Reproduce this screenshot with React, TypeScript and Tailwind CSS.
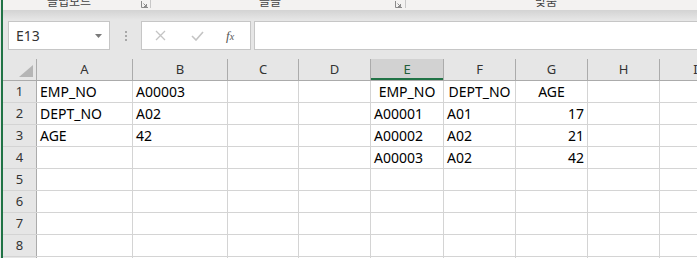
import React from 'react'

const COLS: Array<{ key: string; w: string }> = [
  { key: 'A', w: 'w-[96px]' },
  { key: 'B', w: 'w-[95px]' },
  { key: 'C', w: 'w-[71px]' },
  { key: 'D', w: 'w-[72px]' },
  { key: 'E', w: 'w-[73px]' },
  { key: 'F', w: 'w-[72px]' },
  { key: 'G', w: 'w-[72px]' },
  { key: 'H', w: 'w-[72px]' },
  { key: 'I', w: 'w-[72px]' },
]

type Cell = { v: string; align?: 'left' | 'center' | 'right' }

const DATA: Record<number, Record<string, Cell>> = {
  1: {
    A: { v: 'EMP_NO' },
    B: { v: 'A00003' },
    E: { v: 'EMP_NO', align: 'center' },
    F: { v: 'DEPT_NO', align: 'center' },
    G: { v: 'AGE', align: 'center' },
  },
  2: {
    A: { v: 'DEPT_NO' },
    B: { v: 'A02' },
    E: { v: 'A00001' },
    F: { v: 'A01' },
    G: { v: '17', align: 'right' },
  },
  3: {
    A: { v: 'AGE' },
    B: { v: '42' },
    E: { v: 'A00002' },
    F: { v: 'A02' },
    G: { v: '21', align: 'right' },
  },
  4: {
    E: { v: 'A00003' },
    F: { v: 'A02' },
    G: { v: '42', align: 'right' },
  },
}

const ROWS = [1, 2, 3, 4, 5, 6, 7, 8, 9]

function Launcher() {
  return (
    <svg width="7" height="7" viewBox="0 0 7 7" className="shrink-0">
      <path d="M0.5 0v6.5H7" fill="none" stroke="#8a8a8a" strokeWidth="1" />
      <path d="M2.5 2.5l3 3M5.5 3v2.5H3" fill="none" stroke="#8a8a8a" strokeWidth="1" />
    </svg>
  )
}

function RibbonLabel({ text, w }: { text: string; w: string }) {
  return (
    <div className={`${w} shrink-0 -mt-[7px] text-[12px] leading-[16px] text-[#444] text-center whitespace-nowrap`}>
      {text}
    </div>
  )
}

export default function App() {
  return (
    <div className="w-[697px] h-[258px] overflow-hidden flex bg-[#e6e6e6] font-['Noto_Sans','Noto_Sans_CJK_KR',sans-serif]">
      {/* window edge */}
      <div className="w-px shrink-0 bg-[#e6e6e6]" />
      <div className="w-[2px] shrink-0 bg-[#217346]" />

      <div className="flex-1 min-w-0 h-full flex flex-col overflow-hidden">
        {/* Ribbon bottom (group labels, cut off by the window) */}
        <div className="h-[10px] shrink-0 overflow-hidden bg-[#f3f2f1] flex items-start font-['Noto_Sans_CJK_KR',sans-serif]">
          <div className="w-[42px] shrink-0" />
          <RibbonLabel text="클립보드" w="w-[48px]" />
          <div className="w-[48px] shrink-0" />
          <div className="pt-[1px]"><Launcher /></div>
          <div className="w-[2px] shrink-0" />
          <div className="w-px h-[8px] bg-[#c8c8c8] shrink-0" />
          <div className="w-[107px] shrink-0" />
          <RibbonLabel text="글꼴" w="w-[24px]" />
          <div className="w-[113px] shrink-0" />
          <div className="pt-[1px]"><Launcher /></div>
          <div className="w-[3px] shrink-0" />
          <div className="w-px h-[8px] bg-[#c8c8c8] shrink-0" />
          <div className="w-[128px] shrink-0" />
          <RibbonLabel text="맞춤" w="w-[24px]" />
        </div>
        <div className="h-[10px] shrink-0 bg-gradient-to-b from-[#d3d3d3] to-[#e6e6e6]" />

        {/* Formula bar */}
        <div className="h-[39px] shrink-0 flex items-start pt-px">
          <div className="ml-[5px] w-[102px] h-[29px] bg-white border border-[#c6c6c6] flex items-center pl-[7px] pr-[7px]">
            <span className="text-[14px] text-[#333] flex-1">E13</span>
            <svg width="7" height="4" viewBox="0 0 7 4">
              <path d="M0 0h7L3.5 4z" fill="#7a7a7a" />
            </svg>
          </div>
          <div className="w-[31px] h-[29px] flex flex-col items-center justify-center gap-[2px]">
            <div className="w-[2px] h-[2px] bg-[#a8a8a8]" />
            <div className="w-[2px] h-[2px] bg-[#a8a8a8]" />
            <div className="w-[2px] h-[2px] bg-[#a8a8a8]" />
          </div>
          <div className="w-[110px] h-[29px] bg-white border border-[#c6c6c6] flex items-center">
            <svg width="11" height="11" viewBox="0 0 11 11" className="ml-[13px]">
              <path d="M1 1l9 9M10 1l-9 9" stroke="#c4c4c4" strokeWidth="1.3" fill="none" />
            </svg>
            <svg width="13" height="10" viewBox="0 0 13 10" className="ml-[25px]">
              <path d="M1 5l4 4 7-8" stroke="#c4c4c4" strokeWidth="1.6" fill="none" />
            </svg>
            <span className="ml-[22px] text-[13px] italic text-[#555] font-['Liberation_Serif',serif] leading-none">
              f<span className="text-[10px]">x</span>
            </span>
          </div>
          <div className="ml-[3px] flex-1 h-[29px] bg-white border border-[#c6c6c6] border-r-0" />
        </div>

        {/* Column headers */}
        <div className="h-[22px] flex shrink-0 border-b border-[#ababab] text-[13px] text-[#333]">
          <div className="w-[34px] shrink-0 border-r border-[#ababab] relative flex">
            <svg width="14" height="12" viewBox="0 0 14 12" className="absolute right-[3px] bottom-[3px]">
              <path d="M14 0v12H0z" fill="#b5b5b5" />
            </svg>
          </div>
          {COLS.map(c => (
            <div
              key={c.key}
              className={`${c.w} shrink-0 border-r border-[#ababab] flex items-center justify-center ${
                c.key === 'E' ? 'bg-[#d2d2d2] shadow-[inset_0_-2px_0_#217346] text-[#1e5e3a]' : ''
              }`}
            >
              {c.key}
            </div>
          ))}
        </div>

        {/* Grid */}
        <div className="flex-1 min-h-0 bg-white overflow-hidden">
          {ROWS.map(r => (
            <div key={r} className="h-[22px] flex border-b border-[#d4d4d4]">
              <div className="w-[34px] shrink-0 bg-[#e6e6e6] border-r border-[#ababab] flex items-center justify-center text-[13px] text-[#333]">
                {r}
              </div>
              {COLS.map(c => {
                const cell = DATA[r]?.[c.key]
                const align =
                  cell?.align === 'right' ? 'justify-end pr-[3px]' : cell?.align === 'center' ? 'justify-center' : 'justify-start pl-[3px]'
                return (
                  <div
                    key={c.key}
                    className={`${c.w} shrink-0 border-r border-[#d4d4d4] flex items-center overflow-hidden whitespace-nowrap text-[14px] text-black ${align}`}
                  >
                    {cell?.v}
                  </div>
                )
              })}
            </div>
          ))}
        </div>
      </div>
    </div>
  )
}
